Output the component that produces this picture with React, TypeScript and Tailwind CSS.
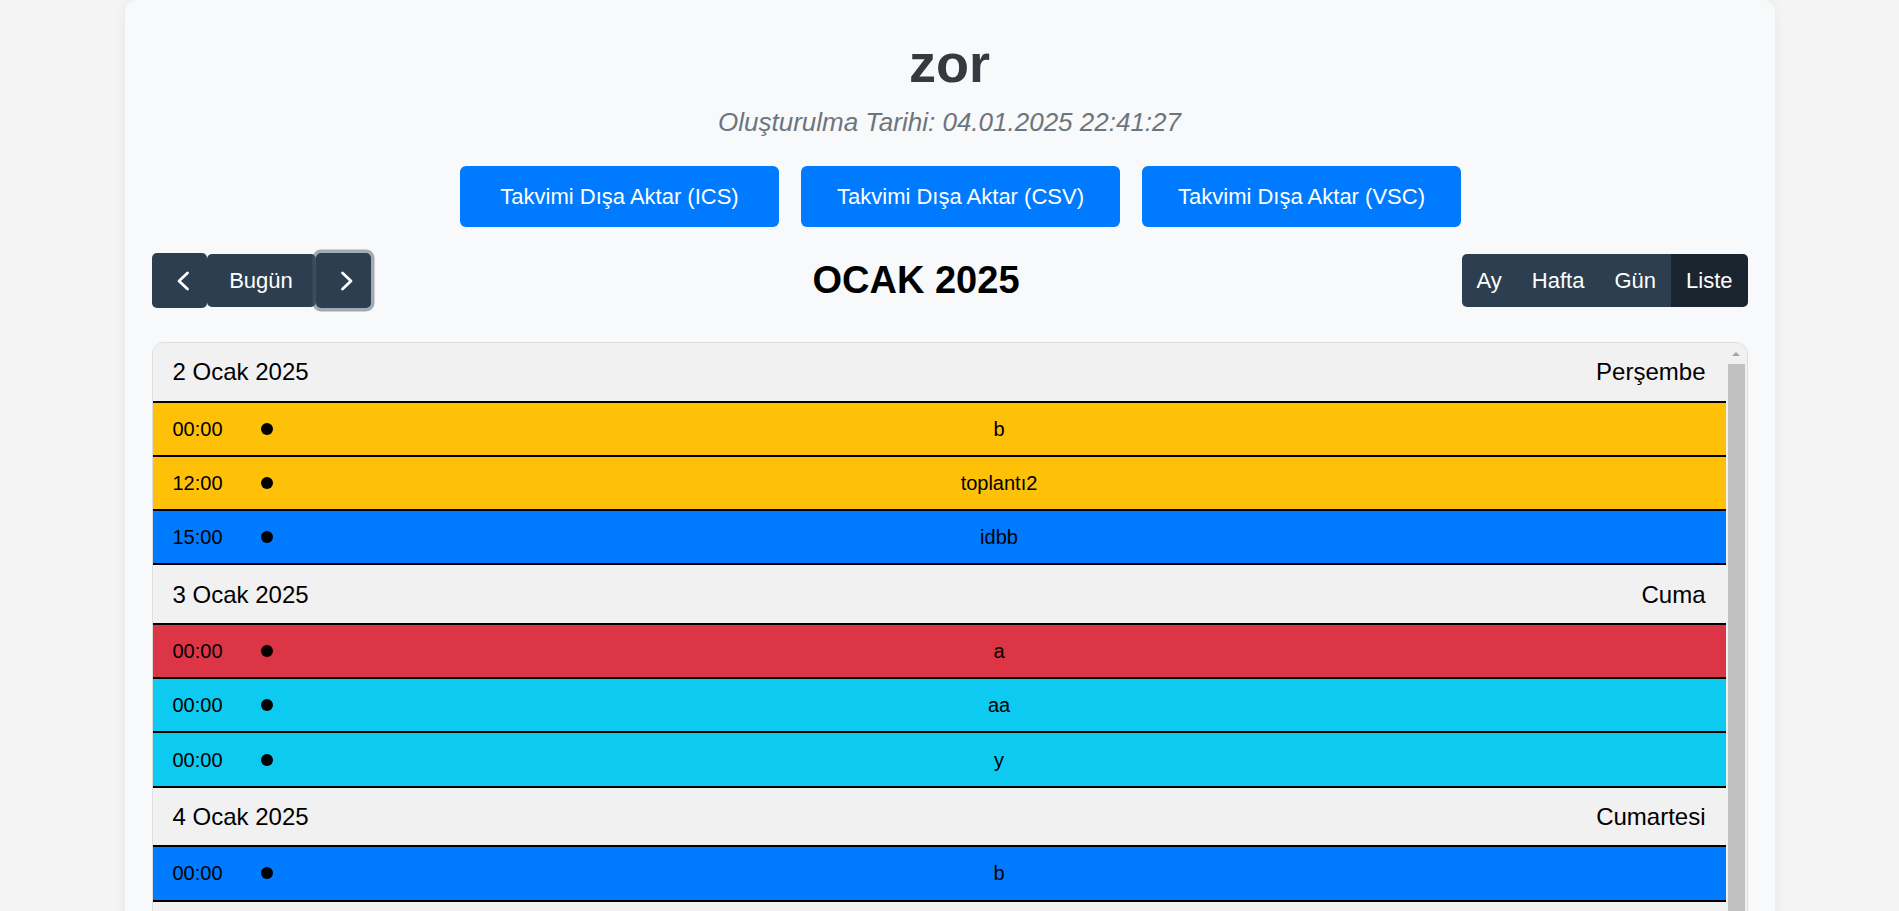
import React from "react";

type Ev = { time: string, title: string, color: string };
type Day = { date: string, name: string, events: Ev[] };

const days: Day[] = [
    {
        date: "2 Ocak 2025", name: "Perşembe", events: [
            { time: "00:00", title: "b", color: "bg-[#ffc107]" },
            { time: "12:00", title: "toplantı2", color: "bg-[#ffc107]" },
            { time: "15:00", title: "idbb", color: "bg-[#007bff]" },
        ]
    },
    {
        date: "3 Ocak 2025", name: "Cuma", events: [
            { time: "00:00", title: "a", color: "bg-[#dc3545]" },
            { time: "00:00", title: "aa", color: "bg-[#0dcaf0]" },
            { time: "00:00", title: "y", color: "bg-[#0dcaf0]" },
        ]
    },
    {
        date: "4 Ocak 2025", name: "Cumartesi", events: [
            { time: "00:00", title: "b", color: "bg-[#007bff]" },
        ]
    },
];

function Chevron({ dir }: { dir: "left" | "right" })
{
    return (
        <svg width="14" height="22" viewBox="0 0 14 22" fill="none" stroke="white" strokeWidth="2.8" strokeLinecap="round" strokeLinejoin="round">
            {dir === "left" ? <polyline points="11.5,3 3,11 11.5,19" /> : <polyline points="2.5,3 11,11 2.5,19" />}
        </svg>
    );
}

export default function App()
{
    return (
        <div className="h-screen overflow-hidden bg-[#f4f4f4] font-['Liberation_Sans',Arial,sans-serif]">
            <div className="mx-auto w-[1650px] rounded-[12px] bg-[#f8f9fa] px-[27px] pt-[31px] shadow-[0_0_12px_rgba(0,0,0,0.06)]">
                <h1 className="text-center text-[54px] font-bold leading-[64px] text-[#343a40]">zor</h1>
                <p className="mt-[13px] text-center text-[26px] italic leading-[28px] text-[#6c757d]">
                    Oluşturulma Tarihi: 04.01.2025 22:41:27
                </p>

                <div className="mt-[30px] flex justify-center gap-[22px] pl-[22px]">
                    {["ICS", "CSV", "VSC"].map(t =>
                        <button key={t} className="h-[61px] w-[319px] rounded-[6px] bg-[#007bff] text-[22px] text-white">
                            Takvimi Dışa Aktar ({t})
                        </button>
                    )}
                </div>

                <div className="mt-[25px] flex items-center justify-between">
                    <div className="flex items-center">
                        <button className="flex h-[55px] w-[55px] items-center justify-center rounded-[5px] bg-[#2c3e50] pl-[8px]">
                            <Chevron dir="left" />
                        </button>
                        <button className="h-[53px] w-[109px] rounded-[5px] bg-[#2c3e50] text-[22px] text-white">
                            Bugün
                        </button>
                        <button className="flex h-[55px] w-[55px] items-center justify-center rounded-[5px] bg-[#2c3e50] pl-[8px] shadow-[0_0_0_3.5px_rgba(76,91,106,0.5)]">
                            <Chevron dir="right" />
                        </button>
                    </div>
                    <h2 className="text-[38px] font-bold text-black">OCAK 2025</h2>
                    <div className="flex h-[53px] overflow-hidden rounded-[5px] text-[22px] text-white">
                        <button className="bg-[#2c3e50] px-[15px]">Ay</button>
                        <button className="bg-[#2c3e50] px-[15px]">Hafta</button>
                        <button className="bg-[#2c3e50] px-[15px]">Gün</button>
                        <button className="bg-[#1a252f] px-[15px]">Liste</button>
                    </div>
                </div>

                <div className="mt-[33px] flex h-[620px] overflow-hidden rounded-t-[12px] border border-[#ddd] bg-[#f1f1f1]">
                    <div className="flex flex-1 flex-col">
                        {days.map(d =>
                            <div key={d.date}>
                                <div className="flex h-[59.5px] items-center justify-between border-b-2 border-black bg-[#f1f1f1] px-[20px] pt-[1px] text-[24px] text-black">
                                    <span>{d.date}</span>
                                    <span>{d.name}</span>
                                </div>
                                {d.events.map((e, i) =>
                                    <div key={i} className={`flex h-[54.3px] items-center border-b-2 border-black text-[20px] text-black ${e.color}`}>
                                        <div className="w-[96px] pl-[20px]">{e.time}</div>
                                        <div className="flex w-[36px] justify-center">
                                            <span className="h-[12px] w-[12px] rounded-full bg-black" />
                                        </div>
                                        <div className="flex-1 pr-[12px] text-center">{e.title}</div>
                                    </div>
                                )}
                            </div>
                        )}
                    </div>
                    <div className="flex w-[21px] flex-col items-center bg-[#f1f1f1]">
                        <div className="flex h-[21px] items-center justify-center">
                            <span className="h-0 w-0 border-x-[4px] border-b-[4px] border-x-transparent border-b-[#a3a3a3]" />
                        </div>
                        <div className="w-[17px] flex-1 bg-[#c1c1c1]" />
                    </div>
                </div>
            </div>
        </div>
    );
}
